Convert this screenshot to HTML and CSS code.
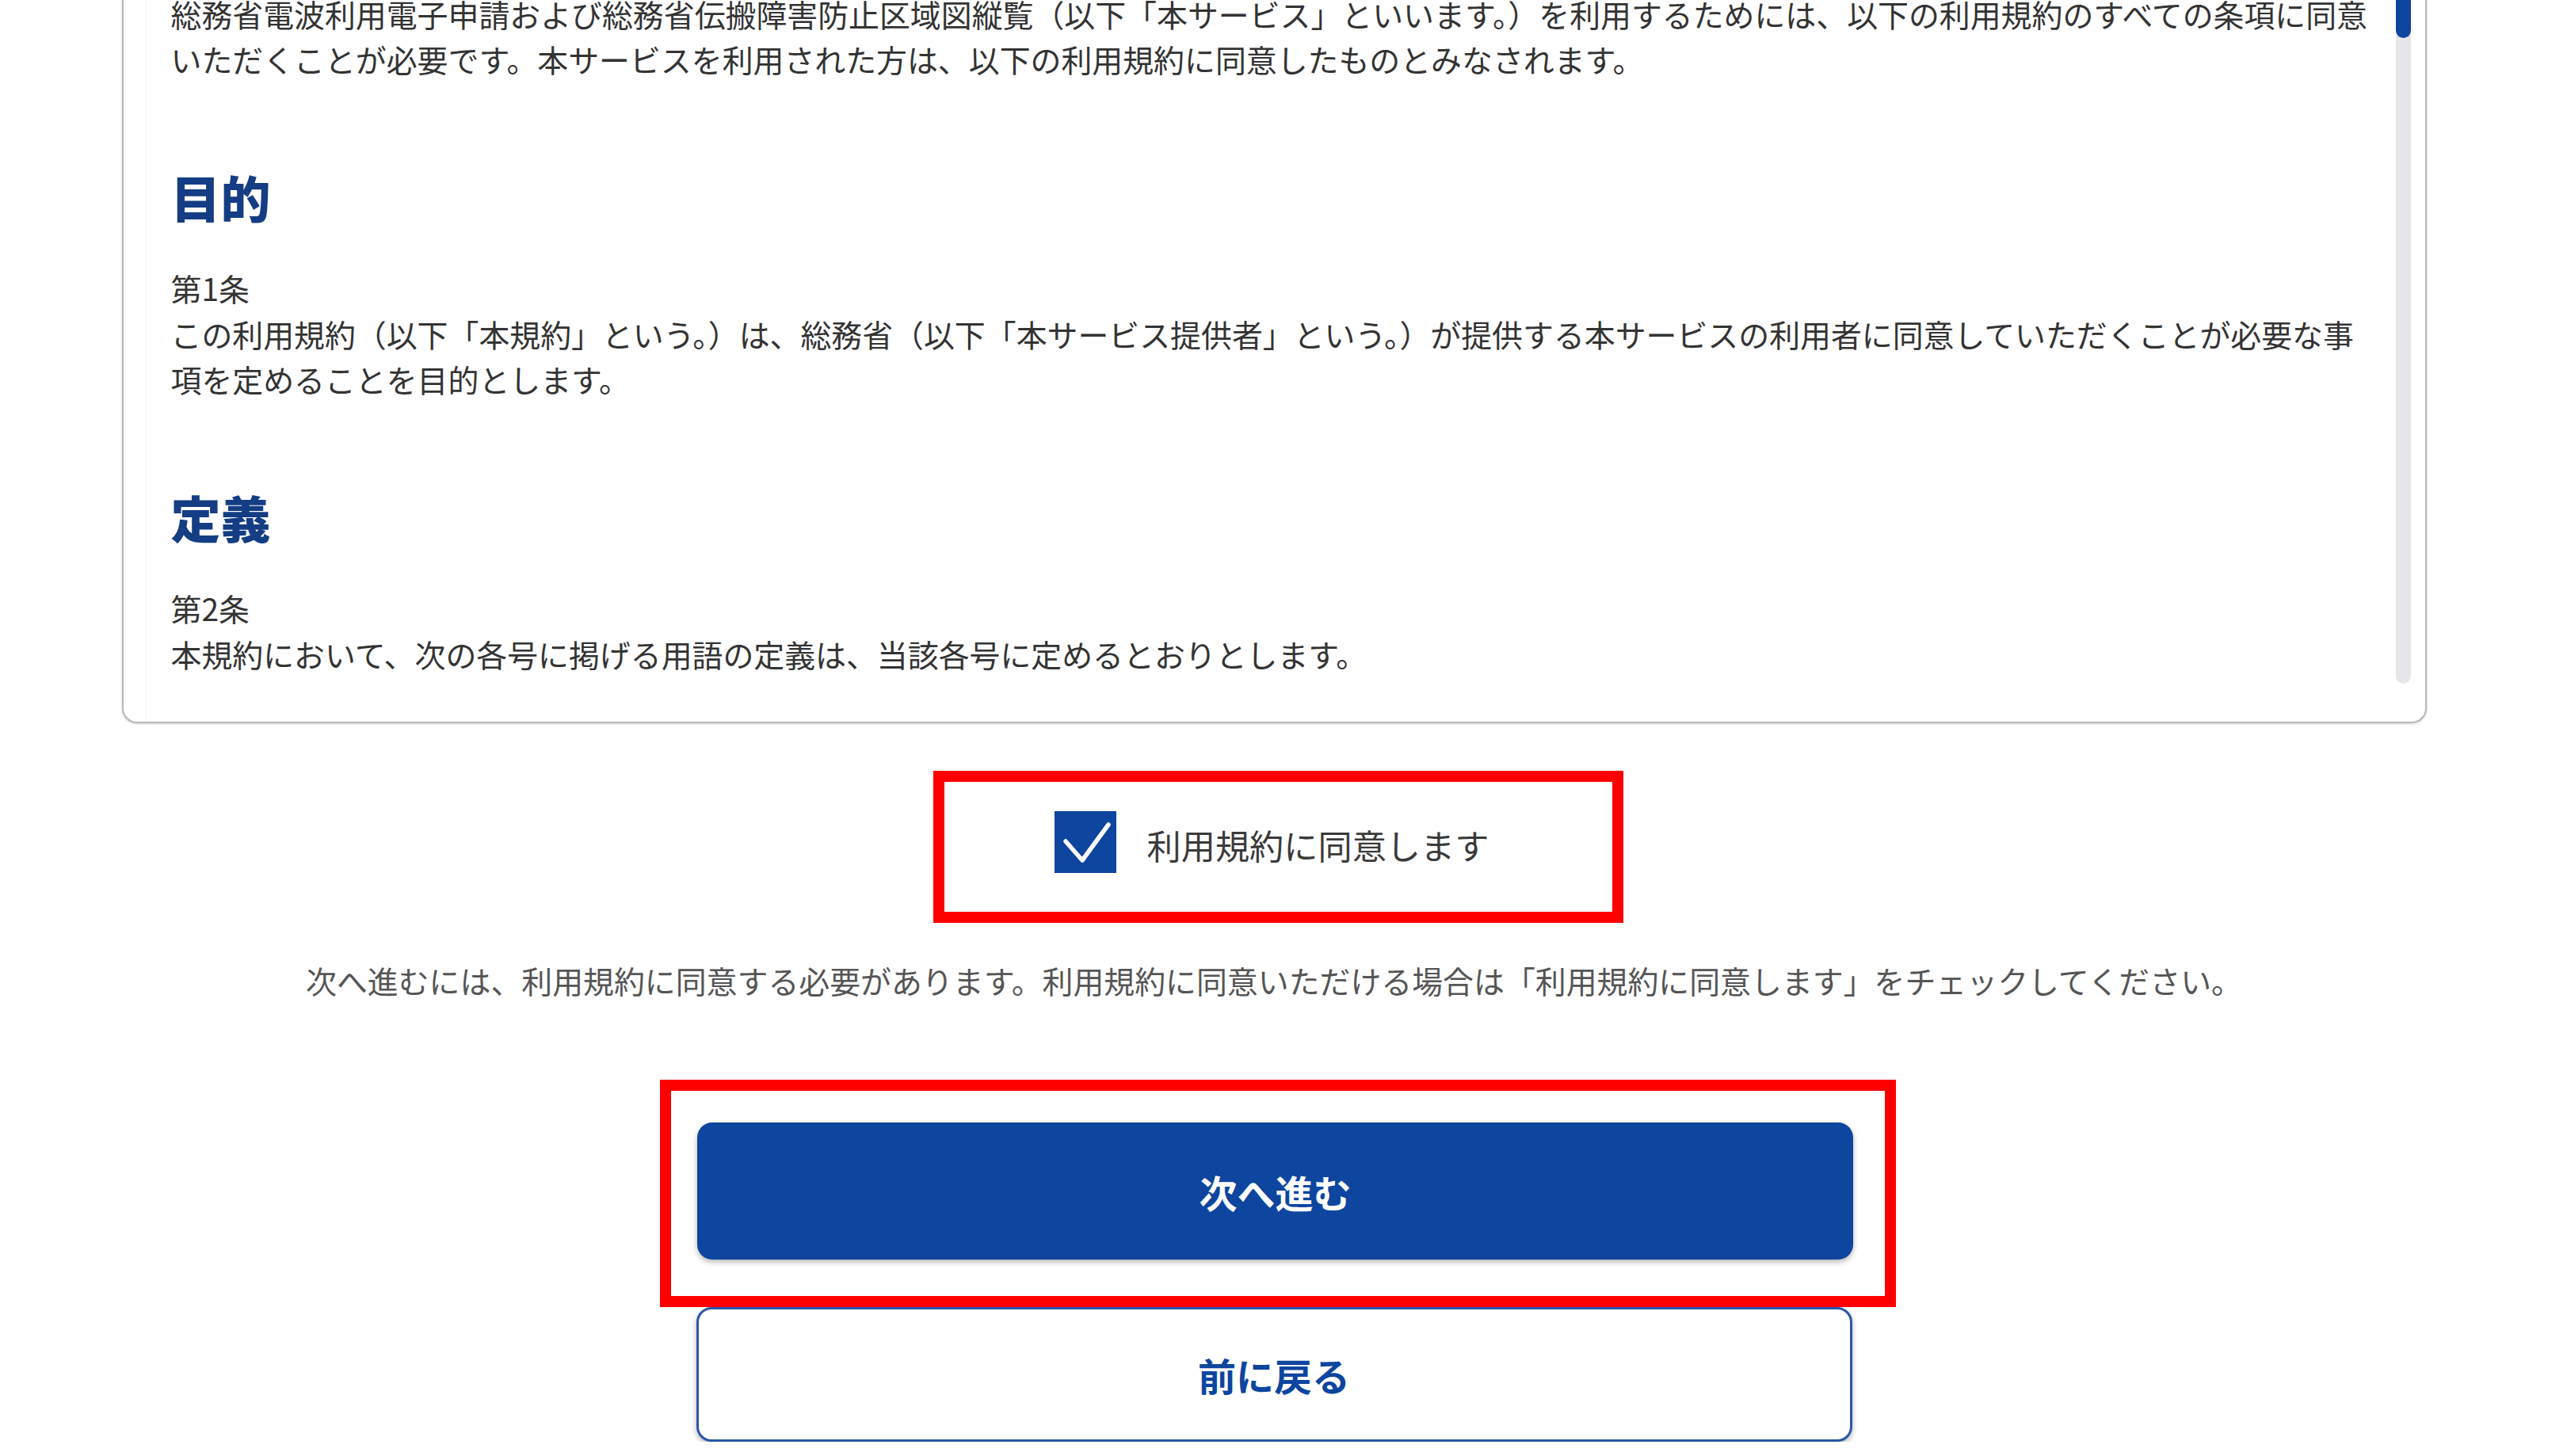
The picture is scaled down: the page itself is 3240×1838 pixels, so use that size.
FILE: index.html
```html
<!DOCTYPE html>
<html lang="ja">
<head>
<meta charset="utf-8">
<title>利用規約</title>
<link rel="stylesheet" href="styles.css">
</head>
<body>
<div class="page">
  <section class="card">
    <div class="scroll-area">
      <p class="text">総務省電波利用電子申請および総務省伝搬障害防止区域図縦覧（以下「本サービス」といいます。）を利用するためには、以下の利用規約のすべての条項に同意いただくことが必要です。本サービスを利用された方は、以下の利用規約に同意したものとみなされます。</p>
      <h2 class="heading">目的</h2>
      <p class="text">第1条<br>この利用規約（以下「本規約」という。）は、総務省（以下「本サービス提供者」という。）が提供する本サービスの利用者に同意していただくことが必要な事項を定めることを目的とします。</p>
      <h2 class="heading">定義</h2>
      <p class="text">第2条<br>本規約において、次の各号に掲げる用語の定義は、当該各号に定めるとおりとします。</p>
    </div>
    <div class="track"><div class="thumb"></div></div>
  </section>

  <div class="annot annot-check">
    <label class="agree">
      <span class="box">
        <svg width="78" height="78" viewBox="0 0 78 78"><polyline points="14,38 35,62 68,17" fill="none" stroke="#ffffff" stroke-width="5.5" stroke-linecap="round" stroke-linejoin="round"/></svg>
      </span>
      <span class="agree-label">利用規約に同意します</span>
    </label>
  </div>

  <p class="note">次へ進むには、利用規約に同意する必要があります。利用規約に同意いただける場合は「利用規約に同意します」をチェックしてください。</p>

  <div class="annot annot-btn">
    <button class="btn btn-primary" type="button">次へ進む</button>
  </div>
  <button class="btn btn-secondary" type="button">前に戻る</button>
</div>
</body>
</html>
```

FILE: styles.css
```css
html, body {
  margin: 0;
  background: #ffffff;
}
body {
  padding-right: 24px;
  font-family: "Noto Sans CJK JP", "Noto Sans", sans-serif;
  color: #333333;
  overflow: hidden;
}
.page {
  width: 2909px;
  margin: 0 auto;
  display: flex;
  flex-direction: column;
  align-items: center;
}
.card {
  align-self: stretch;
  margin-top: -60px;
  border: 2.4px solid #b9b9b9;
  border-radius: 19px;
  box-shadow: 0 1px 3px rgba(0, 0, 0, 0.18);
  padding: 0 18px 0 28px;
  display: flex;
  background: #ffffff;
}
.scroll-area {
  flex: 1;
  border-left: 1px solid #f3f3f3;
  padding: 46.6px 17px 56px 31px;
}
.text {
  margin: 0;
  font-size: 38.9px;
  line-height: 57.6px;
  color: #333333;
}
.heading {
  margin: 101px 0 44px;
  font-size: 63px;
  line-height: 86.4px;
  font-weight: 900;
  color: #143d84;
}
.track {
  width: 19px;
  margin: 20px 0 48px;
  background: #e6e6ea;
  border-radius: 10px;
}
.thumb {
  height: 86px;
  background: #0d459f;
  border-radius: 10px;
}
.annot {
  border: 14px solid #ff0000;
  box-sizing: border-box;
}
.annot-check {
  margin: 60px 0 0 11px;
  padding: 37px 156px 49px 139px;
}
.agree {
  display: flex;
  align-items: center;
  gap: 39px;
}
.box {
  width: 78px;
  height: 78px;
  background: #0d459f;
  display: block;
}
.box svg {
  display: block;
}
.agree-label {
  font-size: 43.2px;
  line-height: 64.8px;
  color: #3a3a3a;
  white-space: nowrap;
  padding-top: 8px;
}
.note {
  margin: 44px 0 0;
  font-size: 38.9px;
  line-height: 57.6px;
  color: #555555;
  text-align: center;
  white-space: nowrap;
}
.annot-btn {
  margin: 97px 0 0 10px;
  padding: 40px 40px 46px 33px;
}
.btn {
  display: flex;
  align-items: center;
  justify-content: center;
  width: 1459px;
  border-radius: 19px;
  font-family: "Noto Sans CJK JP", "Noto Sans", sans-serif;
  font-size: 48px;
  font-weight: 700;
  box-shadow: 0 3px 7px rgba(0, 0, 0, 0.3);
  cursor: pointer;
}
.btn-primary {
  height: 173px;
  background: #0d459f;
  color: #ffffff;
  border: 0;
}
.btn-secondary {
  height: 170px;
  background: #ffffff;
  color: #0d459f;
  border: 3px solid #2a58a8;
}
```
